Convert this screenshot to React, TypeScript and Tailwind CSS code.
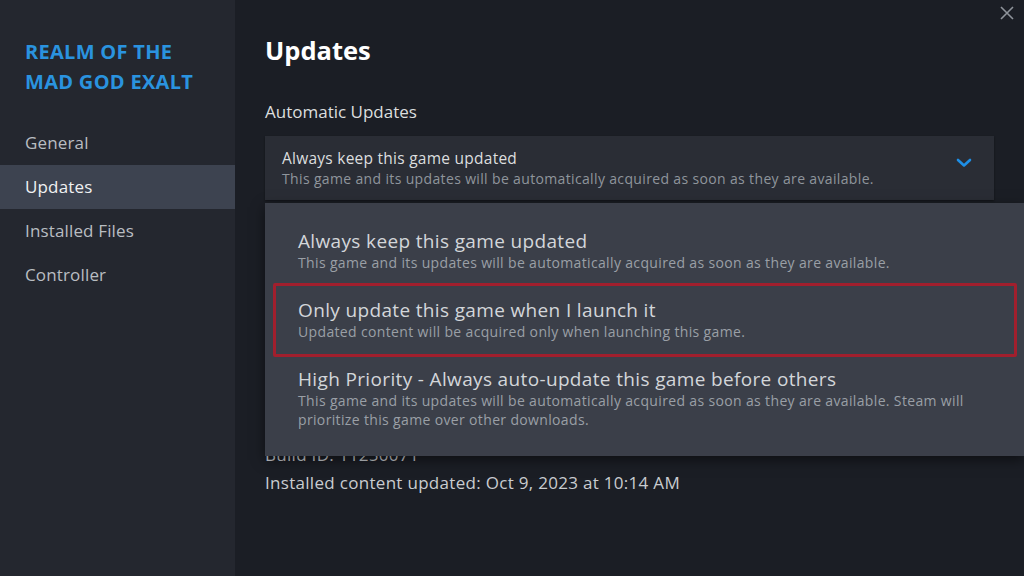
import React from "react";

const font = { fontFamily: '"Open Sans", "Noto Sans", Arial, sans-serif' };

function NavItem({ label, active }: { label: string; active?: boolean }) {
  return (
    <div
      className={`h-[44px] flex items-center pl-[25px] text-[17px] tracking-[0.15px] ${
        active ? "bg-[#3d4350] text-[#f0f1f2]" : "text-[#b9bdc2]"
      }`}
    >
      {label}
    </div>
  );
}

function MenuItem({ title, desc }: { title: string; desc: string[] }) {
  return (
    <div className="min-h-[69px] pt-[13px] pl-[33px] pr-[40px]">
      <div className="text-[19px] leading-[22px] tracking-[0.35px] text-[#d3d6da]">{title}</div>
      <div className="mt-[1px] text-[14px] leading-[19px] tracking-[0.35px] text-[#9a9fa6]">
        {desc.map((d, i) => (
          <div key={i}>{d}</div>
        ))}
      </div>
    </div>
  );
}

export default function App() {
  return (
    <div className="w-[1024px] h-[576px] flex overflow-hidden bg-[#1b1e25]" style={font}>
      {/* Sidebar */}
      <div className="w-[235px] shrink-0 bg-[#24272f] flex flex-col">
        <div className="pt-[37px] pl-[25px] text-[20px] leading-[30px] font-bold text-[#2a93df] tracking-[0.3px]">
          <div>REALM OF THE</div>
          <div>MAD GOD EXALT</div>
        </div>
        <div className="mt-[24px] flex flex-col">
          <NavItem label="General" />
          <NavItem label="Updates" active />
          <NavItem label="Installed Files" />
          <NavItem label="Controller" />
        </div>
      </div>

      {/* Main */}
      <div className="relative flex-1 pl-[30px] pr-[30px] pt-[34px]">
        <button className="absolute top-[5px] right-[9px] w-[16px] h-[16px] flex items-center justify-center">
          <svg width="14" height="14" viewBox="0 0 14 14" fill="none" stroke="#8e939a" strokeWidth="1.6">
            <path d="M1 1 L13 13 M13 1 L1 13" />
          </svg>
        </button>

        <div className="text-[25.5px] leading-[32px] font-bold text-white">Updates</div>
        <div className="mt-[34px] text-[17px] leading-[24px] text-[#dcdedf]">Automatic Updates</div>

        <div className="mt-[12px] h-[64px] bg-[#2a2d35] pl-[17px] pr-[20px] pt-[12px] flex items-start justify-between shadow-[0_1px_2px_rgba(0,0,0,0.4)]">
          <div>
            <div className="text-[15.5px] leading-[20px] tracking-[0.25px] text-[#dcdedf]">Always keep this game updated</div>
            <div className="text-[14px] leading-[22px] tracking-[0.35px] text-[#8f959c]">
              This game and its updates will be automatically acquired as soon as they are available.
            </div>
          </div>
          <svg className="mt-[10px] mr-[2px]" width="16" height="10" viewBox="0 0 16 10" fill="none" stroke="#1e8fe6" strokeWidth="2.6" strokeLinecap="round" strokeLinejoin="round">
            <path d="M2 2 L8 7.5 L14 2" />
          </svg>
        </div>

        <div className="mt-[241px] text-[17px] leading-[28px] tracking-[0.3px] text-[#c9ccd0]">
          <div>Build ID: 11250071</div>
          <div>Installed content updated: Oct 9, 2023 at 10:14 AM</div>
        </div>

        {/* Dropdown menu overlay */}
        <div className="absolute left-[30px] right-0 top-[203px] h-[253px] bg-[#3b3f49] pt-[14px] shadow-[0_4px_12px_rgba(0,0,0,0.5)]">
          <MenuItem
            title="Always keep this game updated"
            desc={["This game and its updates will be automatically acquired as soon as they are available."]}
          />
          <MenuItem
            title="Only update this game when I launch it"
            desc={["Updated content will be acquired only when launching this game."]}
          />
          <MenuItem
            title="High Priority - Always auto-update this game before others"
            desc={[
              "This game and its updates will be automatically acquired as soon as they are available. Steam will",
              "prioritize this game over other downloads.",
            ]}
          />
          <div className="absolute left-[8px] top-[80px] w-[744px] h-[74px] border-[3px] border-[#a11f2d] rounded-[2px]" />
        </div>
      </div>
    </div>
  );
}
